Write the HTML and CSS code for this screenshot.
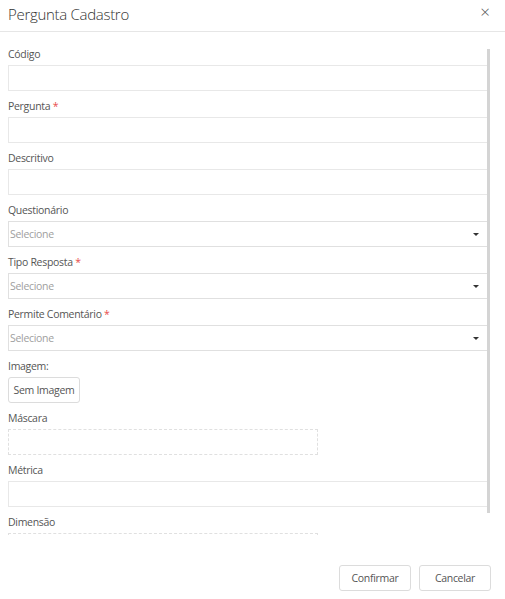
FILE: index.html
```html
<!DOCTYPE html>
<html lang="pt">
<head>
    <meta charset="UTF-8">
    <meta name="viewport" content="width=device-width, initial-scale=1.0">
    <title>Pergunta Cadastro</title>
<link rel="stylesheet" href="styles.css">
</head>
<body>
<div class="modal">
    <!-- Header -->
    <div class="modalHeader">
        <span class="modalTitle">Pergunta Cadastro</span>
        <span class="closeBtn">&times;</span>
    </div>

    <!-- Form body -->
    <div class="modalBody">
        <div class="scrollArea">
            <div class="field">
                <label>Código</label>
                <div class="input"></div>
            </div>
            <div class="field">
                <label>Pergunta <span class="req">*</span></label>
                <div class="input"></div>
            </div>
            <div class="field">
                <label>Descritivo</label>
                <div class="input"></div>
            </div>
            <div class="field">
                <label>Questionário</label>
                <div class="input select"><span class="placeholder">Selecione</span><span class="caret"></span></div>
            </div>
            <div class="field">
                <label>Tipo Resposta <span class="req">*</span></label>
                <div class="input select"><span class="placeholder">Selecione</span><span class="caret"></span></div>
            </div>
            <div class="field">
                <label>Permite Comentário <span class="req">*</span></label>
                <div class="input select"><span class="placeholder">Selecione</span><span class="caret"></span></div>
            </div>
            <div class="field">
                <label>Imagem:</label>
                <button class="btn imgBtn">Sem Imagem</button>
            </div>
            <div class="field">
                <label>Máscara</label>
                <div class="dashed"></div>
            </div>
            <div class="field">
                <label>Métrica</label>
                <div class="input"></div>
            </div>
            <div class="field">
                <label>Dimensão</label>
                <div class="dashed"></div>
            </div>
        </div>
        <div class="scrollThumb"></div>
    </div>

    <!-- Footer -->
    <div class="modalFooter">
        <button class="btn">Confirmar</button>
        <button class="btn">Cancelar</button>
    </div>
</div>
</body>
</html>
```

FILE: styles.css
```css
body {
    margin: 0;
    background: #fff;
    color: #555;
    font-family: "Open Sans", Arial, sans-serif;
}
.modal {
    width: 505px;
    height: 599px;
    display: flex;
    flex-direction: column;
}
.modalHeader {
    height: 31px;
    display: flex;
    align-items: center;
    justify-content: space-between;
    padding: 0 14px 0 8px;
    border-bottom: 1px solid #e6e6e6;
}
.modalTitle {
    font-size: 15px;
    font-weight: 300;
    letter-spacing: -0.3px;
    color: #333;
    margin-top: -4px;
}
.closeBtn {
    font-size: 17px;
    font-weight: 300;
    color: #555;
    margin-top: -8px;
    margin-right: 1px;
}
.modalBody {
    position: relative;
    height: 504px;
}
.scrollArea {
    height: 488px;
    overflow: hidden;
    padding: 15px 15px 0 8px;
}
.scrollThumb {
    position: absolute;
    left: 487px;
    top: 17px;
    width: 3px;
    height: 464px;
    background: #d4d4d4;
}
.field {
    margin-bottom: 8px;
}
label {
    display: block;
    font-size: 10.5px;
    line-height: 15px;
    letter-spacing: -0.3px;
    margin-bottom: 3px;
    color: #555;
}
.req {
    color: #e84c4c;
}
.input {
    height: 24px;
    border: 1px solid #e8e8e8;
    display: flex;
    align-items: center;
    justify-content: space-between;
    padding: 0 10px 0 1px;
}
.select {
    border-color: #e0e0e0;
}
.placeholder {
    font-size: 10.5px;
    letter-spacing: -0.3px;
    color: #a0a0a0;
}
.caret {
    width: 0;
    height: 0;
    border-left: 3px solid transparent;
    border-right: 3px solid transparent;
    border-top: 3px solid #333;
}
.dashed {
    width: 308px;
    height: 24px;
    border: 1px dashed #e0e0e0;
}
.btn {
    height: 26px;
    width: 72px;
    background: #fff;
    border: 1px solid #dcdcdc;
    border-radius: 3px;
    font-family: "Open Sans", Arial, sans-serif;
    font-size: 10.5px;
    letter-spacing: -0.3px;
    color: #555;
    padding: 0;
}
.imgBtn {
    display: block;
}
.modalFooter {
    flex: 1;
    display: flex;
    justify-content: flex-end;
    align-items: flex-start;
    gap: 8px;
    padding: 29px 14px 0 0;
}
```
